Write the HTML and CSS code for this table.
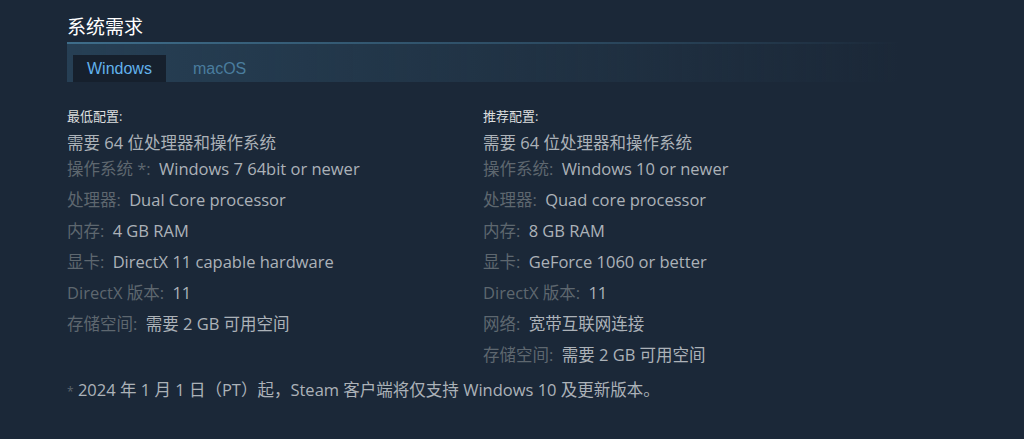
FILE: index.html
```html
<!DOCTYPE html>
<html lang="zh-CN">
<head>
<meta charset="utf-8">
<title>系统需求</title>
<link rel="stylesheet" href="styles.css">
</head>
<body>
<section class="sysreq">
  <h2 class="title">系统需求</h2>
  <div class="tabs">
    <div class="tab active">Windows</div>
    <div class="tab">macOS</div>
  </div>
  <div class="cols">
    <div class="col">
      <div class="colhead">最低配置:</div>
      <ul class="list">
        <li>需要 64 位处理器和操作系统</li>
        <li><span class="lab">操作系统 *:</span> Windows 7 64bit or newer</li>
        <li><span class="lab">处理器:</span> Dual Core processor</li>
        <li><span class="lab">内存:</span> 4 GB RAM</li>
        <li><span class="lab">显卡:</span> DirectX 11 capable hardware</li>
        <li><span class="lab">DirectX 版本:</span> 11</li>
        <li><span class="lab">存储空间:</span> 需要 2 GB 可用空间</li>
      </ul>
    </div>
    <div class="col">
      <div class="colhead">推荐配置:</div>
      <ul class="list">
        <li>需要 64 位处理器和操作系统</li>
        <li><span class="lab">操作系统:</span> Windows 10 or newer</li>
        <li><span class="lab">处理器:</span> Quad core processor</li>
        <li><span class="lab">内存:</span> 8 GB RAM</li>
        <li><span class="lab">显卡:</span> GeForce 1060 or better</li>
        <li><span class="lab">DirectX 版本:</span> 11</li>
        <li><span class="lab">网络:</span> 宽带互联网连接</li>
        <li><span class="lab">存储空间:</span> 需要 2 GB 可用空间</li>
      </ul>
    </div>
  </div>
  <p class="note"><span class="star">*</span> 2024 年 1 月 1 日（PT）起，Steam 客户端将仅支持 Windows 10 及更新版本。</p>
</section>
</body>
</html>
```

FILE: styles.css
```css
html, body {
  margin: 0;
  padding: 0;
  background: #1b2838;
  height: 100%;
}
body {
  font-family: "Open Sans", "Noto Sans CJK SC", sans-serif;
  color: #acb2b8;
}
.sysreq {
  width: 832px;
  margin-left: 67px;
  padding-top: 14px;
}
.title {
  margin: 0;
  font-size: 19px;
  font-weight: normal;
  color: #ffffff;
  line-height: 26px;
  height: 28px;
}
.tabs {
  display: flex;
  align-items: flex-end;
  gap: 13px;
  height: 38px;
  border-top: 2px solid transparent;
  border-image: linear-gradient(to right, #3e6d8a 0%, #2f5068 50%, rgba(47,80,104,0) 100%) 1;
  background: linear-gradient(to right, rgba(42,71,94,0.75) 0%, rgba(38,62,82,0.45) 55%, rgba(27,40,56,0) 100%);
  padding-left: 6px;
}
.tab {
  height: 27px;
  line-height: 27px;
  padding: 0 14px;
  font-family: "Liberation Sans", Arial, sans-serif;
  font-size: 16px;
  color: #4a7d9e;
}
.tab.active {
  background: #16202d;
  color: #62b2ec;
}
.cols {
  display: flex;
  padding-top: 26px;
}
.col {
  width: 416px;
}
.colhead {
  font-size: 13px;
  color: #dcdedf;
  line-height: 16px;
  height: 18px;
}
.list {
  list-style: none;
  margin: 0;
  padding: 0;
}
.list li {
  font-size: 16.5px;
  line-height: 20px;
  padding-top: 11px;
  color: #acb2b8;
}
.list li:first-child {
  padding-top: 7px;
  margin-bottom: -5px;
}
.lab {
  color: #5e676f;
  margin-right: 4px;
}
.note {
  margin: 15px 0 0 0;
  font-size: 16.5px;
  line-height: 20px;
  color: #acb2b8;
}
.star {
  color: #5c656d;
  font-size: 12px;
}
```
